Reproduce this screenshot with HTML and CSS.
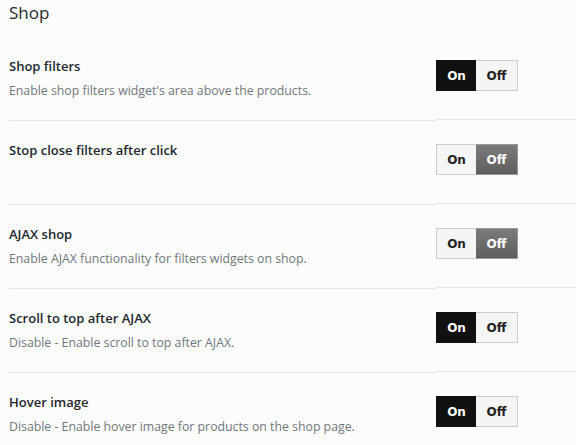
FILE: index.html
```html
<!DOCTYPE html>
<html lang="en">
<head>
    <meta charset="UTF-8">
    <title>Shop settings</title>
    <link rel="stylesheet" href="styles.css">
</head>
<body>
    <div class="panel">
        <h2 class="panel-title">Shop</h2>

        <div class="option-row">
            <div class="option-label">
                <h4>Shop filters</h4>
                <p>Enable shop filters widget's area above the products.</p>
            </div>
            <div class="option-control">
                <div class="switch">
                    <span class="switch-on active">On</span>
                    <span class="switch-off">Off</span>
                </div>
            </div>
        </div>

        <div class="option-row">
            <div class="option-label">
                <h4>Stop close filters after click</h4>
                <p></p>
            </div>
            <div class="option-control">
                <div class="switch">
                    <span class="switch-on">On</span>
                    <span class="switch-off active">Off</span>
                </div>
            </div>
        </div>

        <div class="option-row">
            <div class="option-label">
                <h4>AJAX shop</h4>
                <p>Enable AJAX functionality for filters widgets on shop.</p>
            </div>
            <div class="option-control">
                <div class="switch">
                    <span class="switch-on">On</span>
                    <span class="switch-off active">Off</span>
                </div>
            </div>
        </div>

        <div class="option-row">
            <div class="option-label">
                <h4>Scroll to top after AJAX</h4>
                <p>Disable - Enable scroll to top after AJAX.</p>
            </div>
            <div class="option-control">
                <div class="switch">
                    <span class="switch-on active">On</span>
                    <span class="switch-off">Off</span>
                </div>
            </div>
        </div>

        <div class="option-row">
            <div class="option-label">
                <h4>Hover image</h4>
                <p>Disable - Enable hover image for products on the shop page.</p>
            </div>
            <div class="option-control">
                <div class="switch">
                    <span class="switch-on active">On</span>
                    <span class="switch-off">Off</span>
                </div>
            </div>
        </div>
    </div>
</body>
</html>
```

FILE: styles.css
```css
/* Shop options panel */
body {
    margin: 0;
    background: #fcfcfc;
    font-family: "Open Sans", "Noto Sans", sans-serif;
    color: #23282d;
}

.panel {
    padding-left: 9px;
}

.panel-title {
    margin: 0;
    height: 37px;
    padding-top: 2px;
    box-sizing: border-box;
    font-size: 17px;
    font-weight: 400;
    line-height: 22px;
}

.option-row {
    display: flex;
    align-items: flex-start;
}

.option-label {
    width: 427px;
    height: 84px;
    box-sizing: border-box;
    padding-top: 20px;
    border-bottom: 1px solid #e5e5e5;
}

.option-row:last-child .option-label,
.option-row:last-child .option-control {
    border-bottom: none;
}

.option-label h4 {
    margin: 0;
    font-size: 13px;
    font-weight: 600;
    line-height: 18px;
}

.option-label p {
    margin: 8px 0 0;
    font-size: 12.3px;
    line-height: 16px;
    color: #72777c;
}

.option-control {
    flex: 1;
    height: 83px;
    box-sizing: border-box;
    padding-top: 23px;
    border-bottom: 1px solid #e5e5e5;
}

.switch {
    display: flex;
    width: 82px;
    height: 31px;
    font-family: "DejaVu Sans", Verdana, sans-serif;
    font-size: 12px;
    font-weight: 700;
}

.switch span {
    display: flex;
    align-items: center;
    justify-content: center;
    box-sizing: border-box;
    background: #f5f5f5;
    color: #222;
    border: 1px solid #ccc;
}

.switch-on {
    width: 40px;
    border-right: none !important;
}

.switch-off {
    flex: 1;
    border-left: none !important;
}

.switch-on.active {
    background: #111;
    border-color: #111;
    color: #fff;
}

.switch-off.active {
    background: linear-gradient(#7b7b7b, #5e5e5e);
    border-color: #999;
    color: #fff;
}
```
